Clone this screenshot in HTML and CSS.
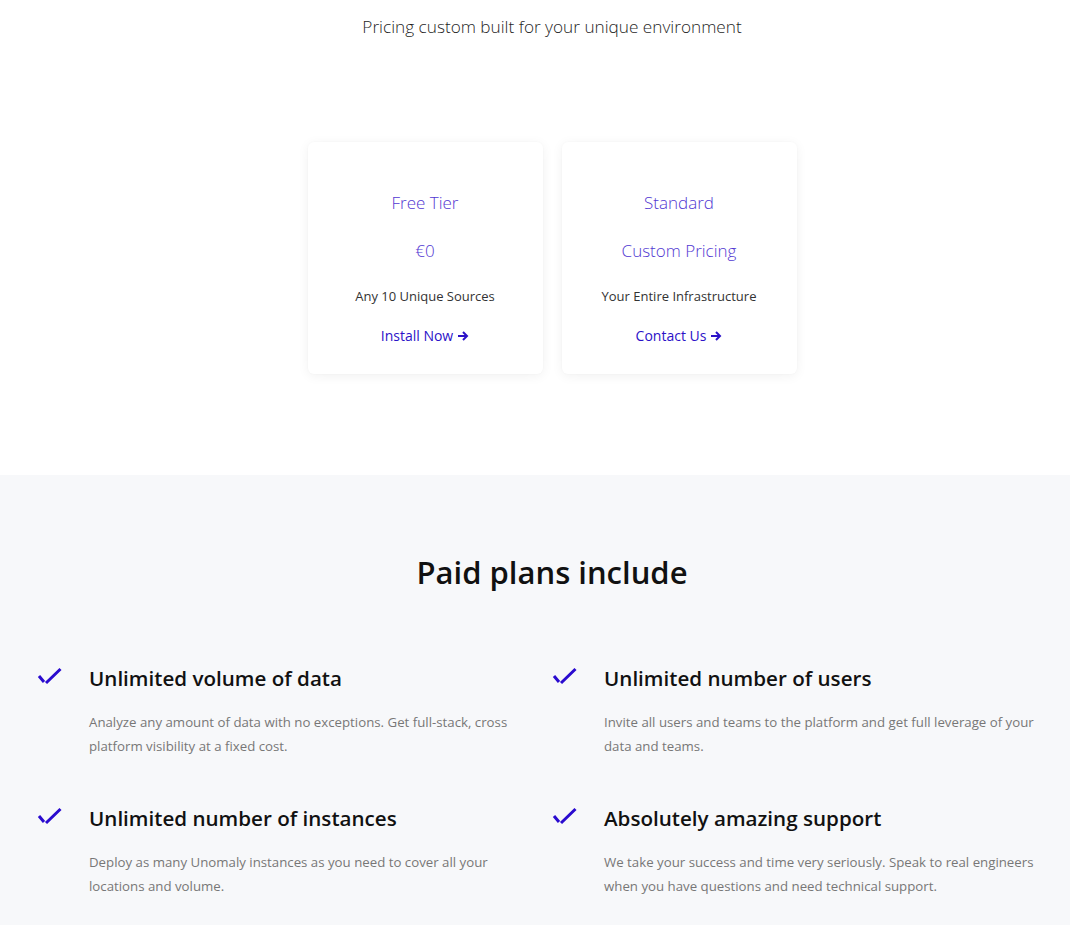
FILE: index.html
```html
<!DOCTYPE html>
<html lang="en">
<head>
<meta charset="utf-8">
<title>Pricing</title>
<link rel="stylesheet" href="styles.css">
</head>
<body>
<section class="pricing">
  <div class="inner">
    <p class="lead">Pricing custom built for your unique environment</p>
    <div class="cards">
      <div class="card">
        <div class="card-title">Free Tier</div>
        <div class="card-price">€0</div>
        <div class="card-desc">Any 10 Unique Sources</div>
        <a class="card-link" href="#">Install Now <svg class="arrow" viewBox="0 0 12 12" width="12" height="12"><path d="M1 6H10M6 2L10 6L6 10" fill="none" stroke="currentColor" stroke-width="2"/></svg></a>
      </div>
      <div class="card">
        <div class="card-title">Standard</div>
        <div class="card-price">Custom Pricing</div>
        <div class="card-desc">Your Entire Infrastructure</div>
        <a class="card-link" href="#">Contact Us <svg class="arrow" viewBox="0 0 12 12" width="12" height="12"><path d="M1 6H10M6 2L10 6L6 10" fill="none" stroke="currentColor" stroke-width="2"/></svg></a>
      </div>
    </div>
  </div>
</section>
<section class="plans">
  <div class="inner">
    <h2 class="plans-title">Paid plans include</h2>
    <div class="features">
      <div class="feature">
        <svg class="check" viewBox="0 0 26 18" width="26" height="18"><path d="M2 9L7 15M9 16L23.5 2" fill="none" stroke="currentColor" stroke-width="3"/></svg>
        <div class="feature-body">
          <h3 class="feature-title">Unlimited volume of data</h3>
          <p class="feature-desc">Analyze any amount of data with no exceptions. Get full-stack, cross platform visibility at a fixed cost.</p>
        </div>
      </div>
      <div class="feature">
        <svg class="check" viewBox="0 0 26 18" width="26" height="18"><path d="M2 9L7 15M9 16L23.5 2" fill="none" stroke="currentColor" stroke-width="3"/></svg>
        <div class="feature-body">
          <h3 class="feature-title">Unlimited number of users</h3>
          <p class="feature-desc">Invite all users and teams to the platform and get full leverage of your data and teams.</p>
        </div>
      </div>
      <div class="feature">
        <svg class="check" viewBox="0 0 26 18" width="26" height="18"><path d="M2 9L7 15M9 16L23.5 2" fill="none" stroke="currentColor" stroke-width="3"/></svg>
        <div class="feature-body">
          <h3 class="feature-title">Unlimited number of instances</h3>
          <p class="feature-desc">Deploy as many Unomaly instances as you need to cover all your locations and volume.</p>
        </div>
      </div>
      <div class="feature">
        <svg class="check" viewBox="0 0 26 18" width="26" height="18"><path d="M2 9L7 15M9 16L23.5 2" fill="none" stroke="currentColor" stroke-width="3"/></svg>
        <div class="feature-body">
          <h3 class="feature-title">Absolutely amazing support</h3>
          <p class="feature-desc">We take your success and time very seriously. Speak to real engineers when you have questions and need technical support.</p>
        </div>
      </div>
    </div>
  </div>
</section>
</body>
</html>
```

FILE: styles.css
```css
* { box-sizing: border-box; }
html, body { margin: 0; padding: 0; }
body {
  font-family: "Open Sans", "Noto Sans", "Liberation Sans", sans-serif;
  color: #222;
  background: #fff;
}
.inner {
  padding: 0 3px 0 37px;
}
.pricing {
  background: #fff;
  padding: 14px 0 101px;
}
.lead {
  margin: 0;
  text-align: center;
  font-size: 17.2px;
  font-weight: 300;
  line-height: 26px;
  color: #1f1f1f;
}
.cards {
  display: flex;
  justify-content: center;
  gap: 19px;
  margin-top: 102px;
}
.card {
  width: 235px;
  height: 232px;
  background: #fff;
  border-radius: 6px;
  box-shadow: 0 2px 12px rgba(0, 0, 0, 0.06), 0 0 2px rgba(0, 0, 0, 0.03);
  padding: 40px 10px 26px;
  text-align: center;
}
.card-title, .card-price {
  font-size: 17px;
  font-weight: 300;
  line-height: 42px;
  color: #5238d2;
}
.card-price { margin-top: 6px; }
.card-desc {
  margin-top: 12px;
  font-size: 13px;
  line-height: 24px;
  color: #333;
}
.card-link {
  display: inline-flex;
  align-items: center;
  gap: 4px;
  margin-top: 16px;
  font-size: 14px;
  line-height: 24px;
  color: #2b12c8;
  text-decoration: none;
}
.arrow { display: block; }
.plans {
  background: #f7f8fa;
  padding: 75px 0 30px;
}
.plans-title {
  margin: 0;
  text-align: center;
  font-size: 31px;
  font-weight: 600;
  line-height: 44px;
  color: #111;
}
.features {
  display: grid;
  grid-template-columns: 1fr 1fr;
  row-gap: 45px;
  margin-top: 69px;
}
.feature {
  display: flex;
  align-items: flex-start;
  gap: 26px;
  padding-right: 20px;
}
.check {
  flex: none;
  color: #2a0bcf;
  margin-top: 4px;
}
.feature-body {
  max-width: 445px;
}
.feature-title {
  margin: 0;
  font-size: 20.6px;
  font-weight: 600;
  line-height: 30px;
  color: #111;
}
.feature-desc {
  margin: 17px 0 0;
  font-size: 13.25px;
  line-height: 24px;
  color: #777;
}
```
